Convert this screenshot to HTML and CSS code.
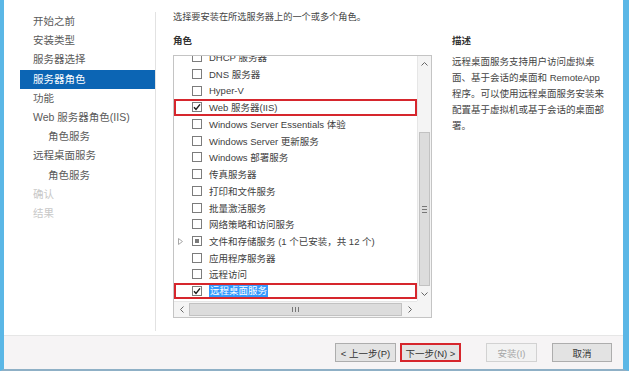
FILE: index.html
```html
<!DOCTYPE html>
<html>
<head>
  <meta charset="utf-8">
  <link rel="stylesheet" href="styles.css">
</head>
<body>
  <div class="window">
    <div class="main">
      <div class="nav">
        <div class="nav-item">开始之前</div>
        <div class="nav-item">安装类型</div>
        <div class="nav-item">服务器选择</div>
        <div class="nav-item active">服务器角色</div>
        <div class="nav-item">功能</div>
        <div class="nav-item">Web 服务器角色(IIS)</div>
        <div class="nav-item sub">角色服务</div>
        <div class="nav-item">远程桌面服务</div>
        <div class="nav-item sub">角色服务</div>
        <div class="nav-item off">确认</div>
        <div class="nav-item off">结果</div>
      </div>

      <div class="content">
        <p class="intro">选择要安装在所选服务器上的一个或多个角色。</p>
        <div class="columns">
          <div class="roles">
            <div class="label">角色</div>
            <div class="listbox">
              <div class="viewport">
                <div class="rows">
                  <div class="row"><span class="box"></span>DHCP 服务器</div>
                  <div class="row"><span class="box"></span>DNS 服务器</div>
                  <div class="row"><span class="box"></span>Hyper-V</div>
                  <div class="row marked"><span class="box"><svg width="8" height="8" viewBox="0 0 8 8"><polyline points="1,4.2 3,6.4 7,1.4" fill="none" stroke="#1e1e1e" stroke-width="1.5"/></svg></span>Web 服务器(IIS)</div>
                  <div class="row"><span class="box"></span>Windows Server Essentials 体验</div>
                  <div class="row"><span class="box"></span>Windows Server 更新服务</div>
                  <div class="row"><span class="box"></span>Windows 部署服务</div>
                  <div class="row"><span class="box"></span>传真服务器</div>
                  <div class="row"><span class="box"></span>打印和文件服务</div>
                  <div class="row"><span class="box"></span>批量激活服务</div>
                  <div class="row"><span class="box"></span>网络策略和访问服务</div>
                  <div class="row">
                    <svg class="expand" width="5" height="7" viewBox="0 0 5 7"><polygon points="0.5,0.5 4.5,3.5 0.5,6.5" fill="none" stroke="#a8a8a8" stroke-width="1"/></svg>
                    <span class="box part"></span>文件和存储服务 (1 个已安装，共 12 个)
                  </div>
                  <div class="row"><span class="box"></span>应用程序服务器</div>
                  <div class="row"><span class="box"></span>远程访问</div>
                  <div class="row marked"><span class="box"><svg width="8" height="8" viewBox="0 0 8 8"><polyline points="1,4.2 3,6.4 7,1.4" fill="none" stroke="#1e1e1e" stroke-width="1.5"/></svg></span><span class="picked">远程桌面服务</span></div>
                </div>
              </div>
              <div class="vscroll">
                <div class="arrow"><svg width="7" height="4" viewBox="0 0 7 4"><polyline points="0.5,3.5 3.5,0.5 6.5,3.5" fill="none" stroke="#666" stroke-width="1"/></svg></div>
                <div class="track">
                  <div class="thumb"><span class="grip"></span></div>
                </div>
                <div class="arrow"><svg width="7" height="4" viewBox="0 0 7 4"><polyline points="0.5,0.5 3.5,3.5 6.5,0.5" fill="none" stroke="#666" stroke-width="1"/></svg></div>
              </div>
              <div class="hscroll">
                <div class="arrow"><svg width="4" height="7" viewBox="0 0 4 7"><polyline points="3.5,0.5 0.5,3.5 3.5,6.5" fill="none" stroke="#666" stroke-width="1"/></svg></div>
                <div class="thumb"><span class="grip"></span></div>
                <div class="arrow"><svg width="4" height="7" viewBox="0 0 4 7"><polyline points="0.5,0.5 3.5,3.5 0.5,6.5" fill="none" stroke="#666" stroke-width="1"/></svg></div>
              </div>
              <div class="corner"></div>
            </div>
          </div>

          <div class="desc">
            <div class="label">描述</div>
            <p class="desc-text">远程桌面服务支持用户访问虚拟桌面、基于会话的桌面和 RemoteApp 程序。可以使用远程桌面服务安装来配置基于虚拟机或基于会话的桌面部署。</p>
          </div>
        </div>
      </div>
    </div>

    <div class="footer">
      <button class="btn prev">&lt; 上一步(P)</button>
      <button class="btn next">下一步(N) &gt;</button>
      <button class="btn install" disabled>安装(I)</button>
      <button class="btn cancel">取消</button>
    </div>
  </div>
</body>
</html>
```

FILE: styles.css
```css
body {
  margin: 0;
  font-family: 'Liberation Sans', 'Noto Sans CJK SC', sans-serif;
  color: #333333;
}

.window {
  width: 619px;
  height: 369px;
  border-left: 4px solid #5bb7e6;
  border-right: 6px solid #5bb7e6;
  border-bottom: 2px solid #8fb0c6;
  display: flex;
  flex-direction: column;
  background: #ffffff;
}

.main {
  height: 335px;
  display: flex;
}

/* left step list */
.nav {
  width: 135px;
  margin: 12px 0 4px 16px;
  border-right: 1px solid #e2e2e2;
  font-size: 10.5px;
}

.nav-item {
  height: 19.2px;
  line-height: 19px;
  padding-left: 13px;
  color: #5a5a5a;
  white-space: nowrap;
}

.nav-item.sub {
  padding-left: 28px;
}

.nav-item.active {
  background: #0c65b4;
  color: #ffffff;
}

.nav-item.off {
  color: #c8c8c8;
}

.content {
  flex: 1;
  padding: 10px 0 0 17px;
}

.intro {
  margin: 0;
  font-size: 9.2px;
  line-height: 14px;
  color: #444444;
}

.columns {
  display: flex;
  gap: 20px;
  margin-top: 10px;
}

.label {
  font-size: 9.5px;
  line-height: 14px;
  font-weight: bold;
  color: #333333;
}

.roles {
  width: 259px;
}

/* role list box */
.listbox {
  margin-top: 7px;
  height: 261px;
  border: 1px solid #c4c4c4;
  display: grid;
  grid-template-columns: 1fr 14px;
  grid-template-rows: 1fr 16px;
}

.viewport {
  overflow: hidden;
}

.rows {
  margin-top: -7px;
}

.row {
  height: 16.7px;
  display: flex;
  align-items: center;
  padding-left: 18px;
  font-size: 9.5px;
  color: #404040;
  white-space: nowrap;
  position: relative;
}

.row.marked {
  box-shadow: inset 0 0 0 2px #d6262d;
}

.box {
  width: 8px;
  height: 8px;
  border: 1px solid #7c7c7c;
  background: #ffffff;
  margin-right: 7px;
  display: flex;
  align-items: center;
  justify-content: center;
  flex-shrink: 0;
}

.box.part::after {
  content: "";
  width: 4px;
  height: 4px;
  background: #7a7a7a;
}

.expand {
  position: absolute;
  left: 4px;
  top: 5px;
}

.picked {
  background: #3399ff;
  color: #ffffff;
  padding: 0 1px;
  line-height: 12px;
}

.vscroll {
  display: flex;
  flex-direction: column;
  background: #f4f4f4;
  border-left: 1px solid #e6e6e6;
}

.arrow {
  height: 15px;
  display: flex;
  align-items: center;
  justify-content: center;
  flex-shrink: 0;
}

.hscroll .arrow {
  width: 15px;
  height: auto;
}

.track {
  flex: 1;
  display: flex;
  flex-direction: column;
}

.vscroll .thumb {
  margin: 61px 1px 0;
  flex: 1;
}

.thumb {
  background: #dcdcdc;
  border: 1px solid #c2c2c2;
  display: flex;
  align-items: center;
  justify-content: center;
}

.vscroll .grip {
  width: 5px;
  height: 5px;
  border-top: 1px solid #777777;
  border-bottom: 1px solid #777777;
  background: linear-gradient(#ffffff00 40%, #777777 40%, #777777 60%, #ffffff00 60%);
}

.hscroll {
  display: flex;
  background: #f4f4f4;
  border-top: 1px solid #e6e6e6;
}

.hscroll .thumb {
  flex: 1;
  margin: 1px 0;
}

.hscroll .grip {
  width: 5px;
  height: 5px;
  border-left: 1px solid #777777;
  border-right: 1px solid #777777;
  background: linear-gradient(90deg, #ffffff00 40%, #777777 40%, #777777 60%, #ffffff00 60%);
}

.corner {
  background: #f4f4f4;
}

/* description */
.desc {
  width: 155px;
}

.desc-text {
  margin: 6px 0 0;
  font-size: 9.5px;
  line-height: 16px;
  color: #444444;
}

/* buttons */
.footer {
  flex: 1;
  border-top: 1px solid #e6e6e6;
  background: #f6f4f5;
  display: flex;
  align-items: center;
  justify-content: flex-end;
  padding-right: 11px;
}

.btn {
  height: 19px;
  padding: 0;
  border: 1px solid #adadad;
  background: #e3e3e3;
  font-family: 'Liberation Sans', 'Noto Sans CJK SC', sans-serif;
  font-size: 9.5px;
  color: #333333;
}

.prev {
  width: 61px;
  margin-right: 4px;
}

.next {
  width: 61px;
  border: 2px solid #d6262d;
}

.install {
  width: 51px;
  margin-left: 25px;
  background: #f2f2f2;
  border-color: #d2d2d2;
  color: #a6a6a6;
}

.cancel {
  width: 60px;
  margin-left: 15px;
}
```
